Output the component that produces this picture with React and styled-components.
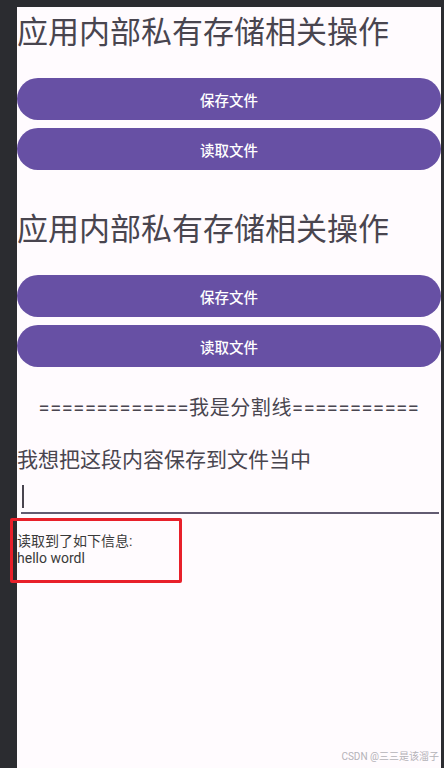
import React from 'react';
import styled, { createGlobalStyle } from 'styled-components';

const GlobalStyle = createGlobalStyle`
    html, body {
        margin: 0;
        padding: 0;
        background: #2b2c30;
    }
    * {
        box-sizing: border-box;
    }
`;

const Frame = styled.div`
    position: relative;
    height: 768px;
    display: flex;
    flex-direction: column;
    background: #2b2c30;
    font-family: Roboto, "Noto Sans CJK SC", sans-serif;
    overflow: hidden;
`;

const TopEdge = styled.div`
    height: 7px;
    flex-shrink: 0;
`;

const Body = styled.div`
    flex: 1;
    display: flex;
`;

const Screen = styled.div`
    flex: 1;
    margin-left: 17px;
    margin-right: 3px;
    background: #fffbfe;
    display: flex;
    flex-direction: column;
`;

const Title = styled.h1`
    margin: 0;
    font-family: Roboto, "Noto Sans CJK SC", sans-serif;
    font-weight: 400;
    font-size: 31px;
    line-height: 37px;
    color: #49454f;
    margin-top: ${({ first }) => (first ? '7px' : '41px')};
`;

const Buttons = styled.div`
    display: flex;
    flex-direction: column;
    gap: 8px;
    margin-top: 27px;
`;

const Button = styled.button`
    height: 42px;
    width: 100%;
    border: none;
    border-radius: 21px;
    background: #6750a4;
    color: #ffffff;
    font-family: Roboto, "Noto Sans CJK SC", sans-serif;
    font-size: 14.5px;
    font-weight: 500;
    cursor: pointer;
    padding: 0;
`;

const Divider = styled.div`
    margin-top: 29px;
    text-align: center;
    font-size: 20px;
    line-height: 24px;
    letter-spacing: 0.6px;
    color: #49454f;
    white-space: nowrap;
`;

const Prompt = styled.div`
    margin-top: 28px;
    font-size: 21px;
    line-height: 25px;
    color: #49454f;
`;

const Field = styled.div`
    margin: 0 2px 0 4px;
    height: 41px;
    border-bottom: 2px solid #625b71;
    display: flex;
    align-items: flex-end;
    padding: 0 0 4px 1px;
`;

const Caret = styled.span`
    width: 2px;
    height: 23px;
    background: #49454f;
`;

const Result = styled.div`
    margin-top: 19px;
    font-size: 14px;
    line-height: 17px;
    color: #3a3a3a;
`;

const Marker = styled.div`
    position: absolute;
    left: 10px;
    top: 518px;
    width: 172px;
    height: 65px;
    border: 3px solid #e8202a;
    border-radius: 2px;
`;

const Watermark = styled.div`
    position: absolute;
    right: 5px;
    bottom: 5px;
    font-size: 10px;
    color: #b4b2b8;
    font-family: Roboto, "Noto Sans CJK SC", sans-serif;
`;

const Section = ({ first }) => (
    <>
        <Title first={first}>应用内部私有存储相关操作</Title>
        <Buttons>
            <Button>保存文件</Button>
            <Button>读取文件</Button>
        </Buttons>
    </>
);

const App = () => (
    <Frame>
        <GlobalStyle />
        <TopEdge />
        <Body>
            <Screen>
                <Section first />
                <Section />
                <Divider>=============我是分割线===========</Divider>
                <Prompt>我想把这段内容保存到文件当中</Prompt>
                <Field>
                    <Caret />
                </Field>
                <Result>
                    读取到了如下信息:
                    <br />
                    hello wordl
                </Result>
            </Screen>
        </Body>
        <Marker />
        <Watermark>CSDN @三三是该溜子</Watermark>
    </Frame>
);

export default App;
